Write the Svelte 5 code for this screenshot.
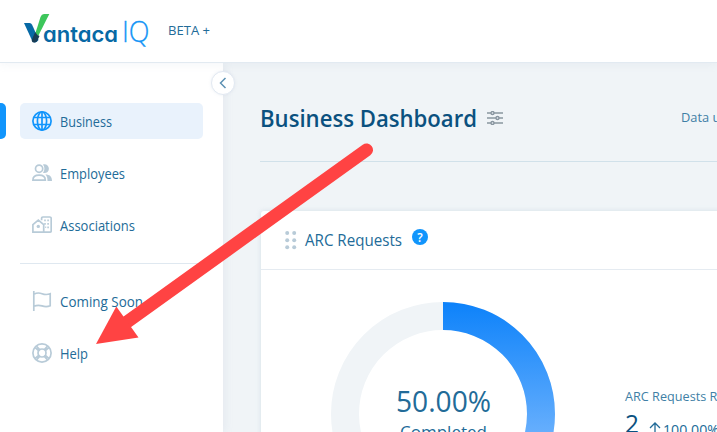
<script>
  const primary = [
    { label: 'Business', icon: 'globe', width: 52, active: true },
    { label: 'Employees', icon: 'people', width: 65 },
    { label: 'Associations', icon: 'homes', width: 75 }
  ];
  const secondary = [
    { label: 'Coming Soon', icon: 'flag', width: 83 },
    { label: 'Help', icon: 'ring', width: 28 }
  ];
</script>

{#snippet fitted(text, width, size, weight = 400)}
  <svg class="fitted" {width} height={size * 1.4} style:font-size="{size}px" style:font-weight={weight}>
    <text x="0" y={size * 1.07} textLength={width} lengthAdjust="spacingAndGlyphs">{text}</text>
  </svg>
{/snippet}

{#snippet icon(name)}
  <svg class="icon" class:blue={name === 'globe'} width="20" height="20" viewBox="0 0 20 20">
    {#if name === 'globe'}
      <circle cx="10" cy="10" r="9.1" /><ellipse cx="10" cy="10" rx="4.6" ry="9.1" />
      <path d="M10 1v18M2 6.5h16M2 13.5h16" />
    {:else if name === 'people'}
      <circle cx="7.1" cy="5.7" r="3.6" />
      <path d="M.9 17.2c0-3.600 1.700-5 6.200-5s6.200 1.400 6.200 5z" />
      <path class="solid" d="M11 1.500c3-.9 5.900 1.200 5.900 4.200s-2.900 5.100-5.900 4.200c1.900-2.600 1.900-5.800 0-8.400zM13.400 11.500c4.200 0 6.600 2 6.600 6.500h-4.500c0-2.800-.4-4.800-2.100-6.500z" />
    {:else if name === 'homes'}
      <path d="M.9 9.600 6.300 5l5.400 4.600v7.600H.9zM9.600 5.200V3.300q0-1.300 1.300-1.300h7q1.300 0 1.300 1.300v12.600q0 1.300-1.300 1.300h-6.200" />
      <circle class="solid" cx="6.300" cy="11.400" r="1.700" />
      <path class="solid" d="M12.200 4.600h1.600v1.600h-1.600zM15.300 4.600h1.600v1.600h-1.600zM12.200 8.100h1.600v1.600h-1.600zM15.300 8.100h1.600v1.600h-1.600zM13.200 11.600h1v1.500h-1zM15.300 11.600h1.600v1.600h-1.600z" />
    {:else if name === 'flag'}
      <path d="M1.800 0v20M1.800 3.200C5.200 1.500 7.500 1.700 10 2.700s5 1.200 8.200.1v12c-3 1.200-5.600 1-8.200.1s-5-.9-8.200.3" />
    {:else}
      <circle cx="10" cy="10" r="9.100" /><circle cx="10" cy="10" r="4" />
      <path d="m3.200 4.600 3.700 3.300M4.600 3.200l3.300 3.700M16.800 4.600l-3.700 3.300M15.400 3.200l-3.300 3.700M3.200 15.400l3.700-3.300M4.600 16.800l3.300-3.700M16.800 15.400l-3.700-3.300M15.400 16.800l-3.300-3.700" />
    {/if}
  </svg>
{/snippet}

{#snippet nav(items)}
  {#each items as item}
    <div class="item" class:active={item.active}>
      {@render icon(item.icon)}
      <span class="label">{@render fitted(item.label, item.width, 14)}</span>
    </div>
  {/each}
{/snippet}

<div class="app">
  <header>
    <svg class="logo" width="126" height="36" viewBox="0 0 126 36">
      <path fill="#0769a5" d="M0 13h5.500q1.800 0 2.600 1.700L12 23.500 14.500 30Q12 34 8.500 31.500z" />
      <path fill="#3dc65b" d="M11.300 23.500 16.500 7Q17.600 4 20 4h5.300L14.200 26z" />
      <path fill="#173c55" d="m11.200 22-3.300 7.600q-.7 2.700 2 2.900 2.500.3 3.500-1.900l2.100-4.700q-2.600-.7-4.300-3.900z" />
      <text class="brand" x="19" y="31.500" textLength="75" lengthAdjust="spacingAndGlyphs">antaca</text>
      <text class="iq" x="98" y="31.700" textLength="27.500" lengthAdjust="spacingAndGlyphs">IQ</text>
    </svg>
    <div class="beta">{@render fitted('BETA +', 42, 12.3)}</div>
  </header>

  <div class="body">
    <aside>
      <nav>
        {@render nav(primary)}
        <hr />
        {@render nav(secondary)}
      </nav>
      <button class="collapse" aria-label="Collapse">
        <svg width="8" height="12" viewBox="0 0 8 12"><path d="M6.500 1 1.500 6l5 5" /></svg>
      </button>
    </aside>

    <main>
      <div class="heading">
        <h1>{@render fitted('Business Dashboard', 217, 24, 600)}</h1>
        <svg class="sliders" width="16" height="14" viewBox="0 0 16 14">
          <path d="M0 2h4M7 2h9M0 7h9M12 7h4M0 12h4M7 12h9" />
          <circle cx="5.500" cy="2" r="1.500" /><circle cx="10.500" cy="7" r="1.500" /><circle cx="5.500" cy="12" r="1.500" />
        </svg>
        <div class="updated">{@render fitted('Data updated', 82, 13)}</div>
      </div>

      <section class="card">
        <div class="card-head">
          <svg class="grip" width="12" height="19" viewBox="0 0 12 19">
            {#each [2, 9.200, 16.300] as cy}
              <circle cx="2.200" {cy} r="2" /><circle cx="9.200" {cy} r="2" />
            {/each}
          </svg>
          {@render fitted('ARC Requests', 97, 16)}
          <span class="question">?</span>
        </div>
        <div class="card-body">
          <div class="donut">
            <svg width="224" height="224" viewBox="0 0 224 224">
              <defs>
                <linearGradient id="progress" gradientUnits="userSpaceOnUse" x1="0" y1="0" x2="0" y2="224">
                  <stop offset="0" stop-color="#0d82fa" /><stop offset="1" stop-color="#a5ceff" />
                </linearGradient>
              </defs>
              <circle cx="112" cy="112" r="98" fill="none" stroke="#f0f4f7" stroke-width="28" />
              <path d="M112 14a98 98 0 0 1 0 196" fill="none" stroke="url(#progress)" stroke-width="28" />
            </svg>
            <div class="center">
              {@render fitted('50.00%', 95, 28.500)}
              {@render fitted('Completed', 87, 17)}
            </div>
          </div>
          <div class="stats">
            {@render fitted('ARC Requests Received', 137, 13)}
            <div class="value">
              {@render fitted('2', 14, 25.500)}
              <svg class="up" width="12" height="14" viewBox="0 0 12 14"><path d="M6 14V1M1 6l5-5 5 5" /></svg>
              <span class="change">{@render fitted('100.00%', 56, 15)}</span>
            </div>
          </div>
        </div>
      </section>
    </main>
  </div>

  <svg class="arrow" width="717" height="432" viewBox="0 0 717 432">
    <path class="shaft" d="M127 322 366.500 150" />
    <path class="head" d="M96 344 116.300 306.500 138.500 337.500z" />
  </svg>
</div>

<style>
  :global(body) { overflow: hidden; }
  .app {
    position: relative;
    display: flex;
    flex-direction: column;
    width: 717px;
    height: 432px;
    overflow: hidden;
    background: #f0f4f7;
    color: #226b98;
    font-family: "Open Sans", "Noto Sans", sans-serif;
  }
  svg { display: block; flex: none; }
  .fitted { overflow: visible; fill: currentColor; }
  header {
    position: relative;
    z-index: 2;
    display: flex;
    flex: none;
    box-sizing: border-box;
    height: 63px;
    padding: 10px 0 0 24px;
    border-bottom: 1px solid #e2eaf1;
    background: #fff;
    box-shadow: 0 2px 8px #9aabc019;
  }
  .logo { overflow: visible; }
  .brand { fill: #0769a5; font: 600 21.5px Inter, sans-serif; font-feature-settings: "cv11"; }
  .iq { fill: #1595f6; stroke: #1595f6; stroke-width: .3; font: 300 30px "Open Sans", sans-serif; }
  .beta { padding: 12px 0 0 18px; }
  .body { display: flex; flex: 1; min-height: 0; }
  aside {
    position: relative;
    z-index: 1;
    flex: none;
    box-sizing: border-box;
    width: 223px;
    padding: 40px 20px 0;
    background: #fff;
    box-shadow: 2px 0 8px #9aabc020;
  }
  nav { display: flex; flex-direction: column; gap: 16px; }
  .item {
    position: relative;
    display: flex;
    align-items: center;
    gap: 8px;
    box-sizing: border-box;
    height: 36px;
    padding-left: 12px;
    border-radius: 5px;
  }
  .label { padding-top: 2px; }
  .item.active { background: #e9f2fc; }
  .item.active::before {
    content: "";
    position: absolute;
    left: -26px;
    width: 12px;
    height: 36px;
    border-radius: 5px;
    background: #1195fc;
  }
  .icon { fill: none; stroke: #b8cbd8; stroke-width: 1.700; }
  .icon.blue { stroke: #1195fc; }
  .icon .solid { fill: #b8cbd8; stroke: none; }
  hr { width: 100%; height: 1px; margin: 4px 0 3px; border: 0; background: #dfe8f0; }
  .collapse {
    position: absolute;
    top: 8px;
    right: -12px;
    display: grid;
    place-items: center;
    width: 24px;
    height: 24px;
    padding: 0;
    border: 1px solid #e2e9f2;
    border-radius: 50%;
    background: #fff;
    box-shadow: 0 0 3px #b6c5d840;
  }
  .collapse path { fill: none; stroke: #5c91b3; stroke-width: 1.500; }
  main { flex: none; width: 557px; padding-left: 37px; }
  .heading {
    display: flex;
    align-items: center;
    box-sizing: border-box;
    height: 99px;
    padding-top: 12px;
    border-bottom: 1px solid #d1e1ea;
  }
  h1 { margin: 0; padding-bottom: 1px; color: #0b517f; }
  .sliders { margin: 0 0 0 10px; stroke: #8996a0; stroke-width: 1.400; fill: none; }
  .updated { margin-left: 178px; padding-bottom: 2px; color: #407fa6; }
  .card {
    margin: 49px 0 0 1px;
    height: 300px;
    background: #fff;
    border-radius: 3px;
    box-shadow: 0 0 5px #b5c5d470;
  }
  .card-head {
    display: flex;
    align-items: center;
    box-sizing: border-box;
    height: 59px;
    padding-left: 24px;
    border-bottom: 1px solid #e5ebf1;
  }
  .grip { margin-right: 8px; fill: #b8cbd8; }
  .question {
    display: grid;
    place-items: center;
    width: 16px;
    height: 16px;
    margin: -6px 0 0 10px;
    border-radius: 50%;
    background: #1195fc;
    color: #fff;
    font: 600 12px "Open Sans", sans-serif;
  }
  .card-body { display: flex; padding: 32px 0 0 70px; }
  .donut { display: grid; place-items: center; }
  .donut > * { grid-area: 1 / 1; }
  .center { display: flex; flex-direction: column; align-items: center; padding-bottom: 1px; }
  .center > :last-child { margin-top: -2px; }
  .center > :first-child { margin-top: -1px; }
  .stats { padding: 85px 0 0 70px; color: #407fa6; }
  .value { display: flex; align-items: flex-end; padding-top: 1px; color: #226b98; }
  .value > :first-child { fill: #0b517f; }
  .up { margin: 0 2px 6px 10px; fill: none; stroke: #226b98; stroke-width: 1.300; }
  .change { padding-bottom: 2px; }
  .arrow { position: absolute; z-index: 5; inset: 0; pointer-events: none; }
  .shaft { fill: none; stroke: #ff4343; stroke-width: 13; stroke-linecap: round; }
  .head { fill: #ff4343; }
</style>
